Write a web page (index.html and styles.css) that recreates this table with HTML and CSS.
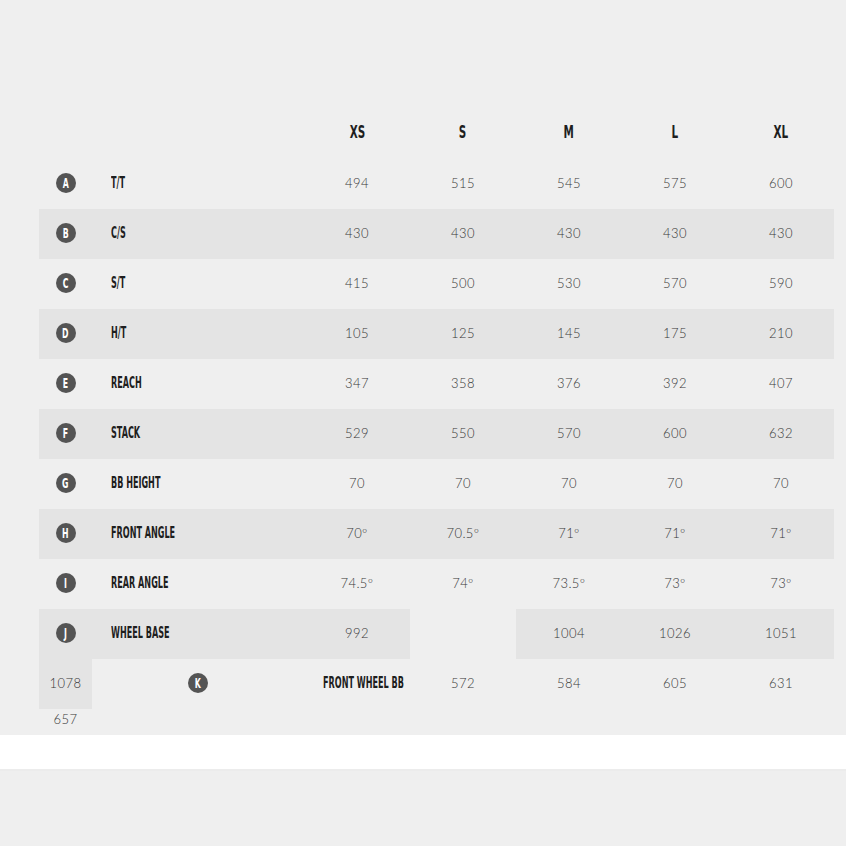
FILE: index.html
```html
<!DOCTYPE html>
<html>
<head>
<meta charset="utf-8">
<link rel="stylesheet" href="styles.css">
</head>
<body>
<div class="page">
  <div class="geo">
    <div class="cell head"></div><div class="cell head"></div>
    <div class="cell head"><span class="hd">XS</span></div><div class="cell head"><span class="hd">S</span></div><div class="cell head"><span class="hd">M</span></div><div class="cell head"><span class="hd">L</span></div><div class="cell head"><span class="hd">XL</span></div>

    <div class="cell mark"><span class="dot"><span class="dl">A</span></span></div><div class="cell label"><span class="lt">T/T</span></div>
    <div class="cell num">494</div><div class="cell num">515</div><div class="cell num">545</div><div class="cell num">575</div><div class="cell num">600</div>

    <div class="cell mark alt"><span class="dot"><span class="dl">B</span></span></div><div class="cell label alt"><span class="lt">C/S</span></div>
    <div class="cell num alt">430</div><div class="cell num alt">430</div><div class="cell num alt">430</div><div class="cell num alt">430</div><div class="cell num alt">430</div>

    <div class="cell mark"><span class="dot"><span class="dl">C</span></span></div><div class="cell label"><span class="lt">S/T</span></div>
    <div class="cell num">415</div><div class="cell num">500</div><div class="cell num">530</div><div class="cell num">570</div><div class="cell num">590</div>

    <div class="cell mark alt"><span class="dot"><span class="dl">D</span></span></div><div class="cell label alt"><span class="lt">H/T</span></div>
    <div class="cell num alt">105</div><div class="cell num alt">125</div><div class="cell num alt">145</div><div class="cell num alt">175</div><div class="cell num alt">210</div>

    <div class="cell mark"><span class="dot"><span class="dl">E</span></span></div><div class="cell label"><span class="lt">REACH</span></div>
    <div class="cell num">347</div><div class="cell num">358</div><div class="cell num">376</div><div class="cell num">392</div><div class="cell num">407</div>

    <div class="cell mark alt"><span class="dot"><span class="dl">F</span></span></div><div class="cell label alt"><span class="lt">STACK</span></div>
    <div class="cell num alt">529</div><div class="cell num alt">550</div><div class="cell num alt">570</div><div class="cell num alt">600</div><div class="cell num alt">632</div>

    <div class="cell mark"><span class="dot"><span class="dl">G</span></span></div><div class="cell label"><span class="lt">BB HEIGHT</span></div>
    <div class="cell num">70</div><div class="cell num">70</div><div class="cell num">70</div><div class="cell num">70</div><div class="cell num">70</div>

    <div class="cell mark alt"><span class="dot"><span class="dl">H</span></span></div><div class="cell label alt"><span class="lt">FRONT ANGLE</span></div>
    <div class="cell num alt">70º</div><div class="cell num alt">70.5º</div><div class="cell num alt">71º</div><div class="cell num alt">71º</div><div class="cell num alt">71º</div>

    <div class="cell mark"><span class="dot"><span class="dl">I</span></span></div><div class="cell label"><span class="lt">REAR ANGLE</span></div>
    <div class="cell num">74.5º</div><div class="cell num">74º</div><div class="cell num">73.5º</div><div class="cell num">73º</div><div class="cell num">73º</div>

    <div class="cell mark alt"><span class="dot"><span class="dl">J</span></span></div><div class="cell label alt"><span class="lt">WHEEL BASE</span></div>
    <div class="cell num alt">992</div><div class="cell num"></div><div class="cell num alt">1004</div><div class="cell num alt">1026</div><div class="cell num alt">1051</div>

    <div class="cell num alt">1078</div><div class="cell mark"><span class="dot"><span class="dl">K</span></span></div>
    <div class="cell label"><span class="lt">FRONT WHEEL BB</span></div><div class="cell num">572</div><div class="cell num">584</div><div class="cell num">605</div><div class="cell num">631</div>

    <div class="cell num short">657</div>
  </div>
</div>
<div class="band"></div>
<div class="foot"></div>
</body>
</html>
```

FILE: styles.css
```css
html, body {
  margin: 0;
  padding: 0;
  background: #efefef;
}

.page {
  background: #efefef;
  padding-top: 109px;
}

.geo {
  margin-left: 39px;
  display: grid;
  grid-template-columns: 53px 212px repeat(5, 106px);
  grid-template-rows: repeat(12, 50px) 26px;
}

.cell {
  display: flex;
  align-items: center;
  justify-content: center;
  padding-bottom: 2px;
  box-sizing: border-box;
  white-space: nowrap;
}

.alt {
  background: #e4e4e4;
}

.head {
  padding-bottom: 4px;
}

.hd {
  display: inline-block;
  font-family: "DejaVu Sans Condensed", "DejaVu Sans", sans-serif;
  font-weight: 700;
  font-size: 17px;
  color: #1e1e1e;
  transform: scaleX(0.68);
}

.label {
  justify-content: flex-start;
  padding-left: 19px;
}

.lt {
  display: inline-block;
  font-family: "DejaVu Sans Condensed", "DejaVu Sans", sans-serif;
  font-weight: 700;
  font-size: 15px;
  color: #1e1e1e;
  transform: scaleX(0.6);
  transform-origin: left center;
}

.num {
  font-family: "Lato", "Open Sans", sans-serif;
  font-weight: 300;
  font-size: 13px;
  color: #383838;
  letter-spacing: 0.4px;
}

.dot {
  width: 20px;
  height: 20px;
  border-radius: 50%;
  background: #545454;
  display: flex;
  align-items: center;
  justify-content: center;
}

.dl {
  display: inline-block;
  color: #fff;
  font-family: "DejaVu Sans Condensed", "DejaVu Sans", sans-serif;
  font-weight: 700;
  font-size: 14px;
  line-height: 1;
  transform: scaleX(0.62);
}

.short {
  align-items: flex-start;
  padding-top: 2px;
  padding-bottom: 0;
}

.band {
  height: 34px;
  background: #ffffff;
}

.foot {
  height: 100px;
  background: #efefef;
  border-top: 2px solid #ececec;
}
```
